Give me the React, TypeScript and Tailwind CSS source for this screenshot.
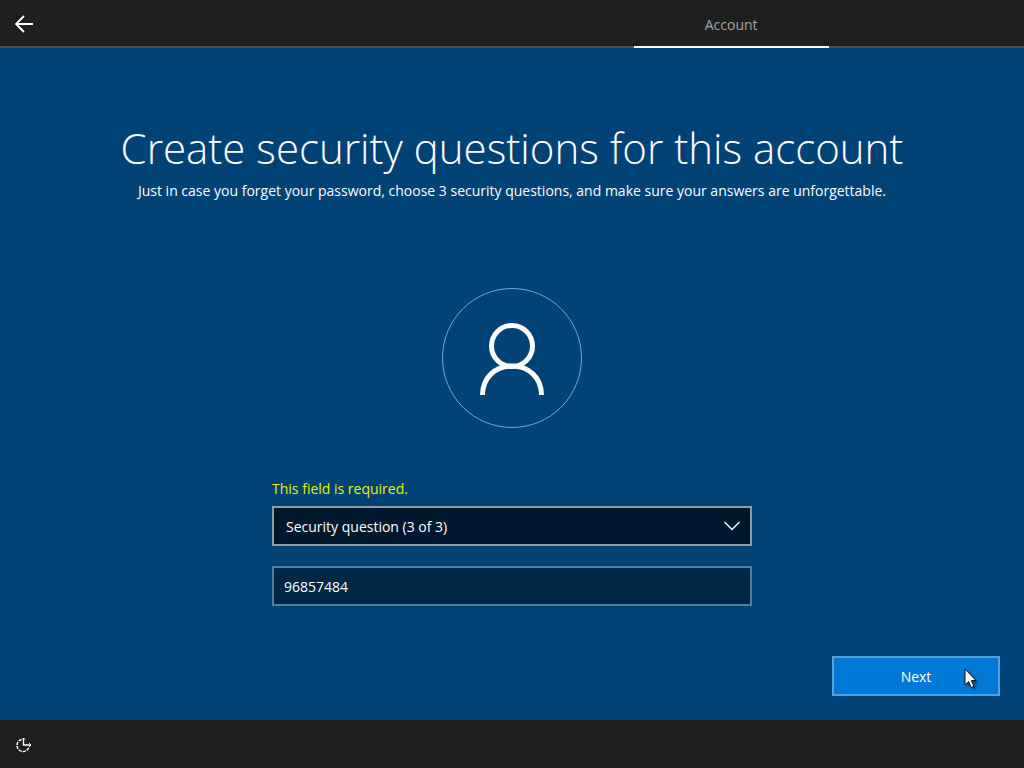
import { useState } from 'react';

const STEPS = ['', '', '', 'Account', ''];
const ACTIVE_STEP = 3;

const QUESTIONS = [
  'Security question (3 of 3)',
  "What was your first pet's name?",
  "What's the name of the city where you were born?",
  'What was your childhood nickname?',
];

function BackIcon() {
  return (
    <svg width="20" height="18" viewBox="0 0 20 18" fill="none" stroke="#fff" strokeWidth="1.8" aria-hidden="true">
      <path d="M19 9H2M10 1L2 9l8 8" />
    </svg>
  );
}

function UserIcon() {
  return (
    <svg width="66" height="74" viewBox="0 0 66 74" fill="none" stroke="#fff" strokeWidth="5" aria-hidden="true">
      <circle cx="33" cy="24" r="20.5" />
      <path d="M3.5 73C3.5 56 16 44 33 44s29.5 12 29.5 29" />
    </svg>
  );
}

function EaseOfAccessIcon() {
  return (
    <svg width="18" height="16" viewBox="0 0 18 16" fill="none" stroke="#fff" strokeWidth="1.4" aria-hidden="true">
      <path d="M6.500 2.500A6 6 0 0 0 2 8.500a6 6 0 0 0 6 6 6 6 0 0 0 6-4.500" strokeDasharray="3.200 1" />
      <path d="M8.500 1v7H16" />
      <path d="M7 2.500l1.500-1.500L10 2.500M14 6l2 2-2 2" strokeWidth="1" />
    </svg>
  );
}

function Pointer() {
  return (
    <svg
      className="absolute right-5 top-[10px] drop-shadow-[2px_2px_1px_rgba(0,0,0,0.4)]"
      width="14"
      height="21"
      viewBox="0 0 14 21"
      aria-hidden="true"
    >
      <path d="M1 1v16l3.700-3.500 2.500 6 2.700-1.200-2.500-5.700H12z" fill="#fff" stroke="#111" strokeWidth="1" />
    </svg>
  );
}

export default function App() {
  const [question, setQuestion] = useState(QUESTIONS[0]);
  const [answer, setAnswer] = useState('96857484');

  return (
    <div className="min-h-screen flex flex-col bg-[#004275] text-white text-sm font-['Open_Sans',sans-serif]">
      <header className="h-12 flex bg-[#1f1f1f]">
        <button type="button" aria-label="Back" className="w-12 pt-0.5 flex items-center justify-center border-b-2 border-[#505050]">
          <BackIcon />
        </button>
        <nav className="flex-1 grid grid-cols-5">
          {STEPS.map((step, i) => (
            <div
              key={i}
              className={`flex items-center justify-center pt-1 border-b-2 text-[#a6a6a6] ${
                i === ACTIVE_STEP ? 'border-white' : 'border-[#505050]'
              }`}
            >
              {step}
            </div>
          ))}
        </nav>
      </header>

      <main className="flex-1 flex flex-col items-center px-6 pt-[70px] pb-6">
        <h1 className="text-[42px] leading-[60px] font-light text-center">
          Create security questions for this account
        </h1>
        <p className="mt-[3px] leading-5 text-center">
          Just in case you forget your password, choose 3 security questions, and make sure your answers are unforgettable.
        </p>

        <div className="mt-[87px] size-[140px] pt-0.5 rounded-full border border-[#6fa8dc] flex items-center justify-center">
          <UserIcon />
        </div>

        <form className="mt-[51px] w-full max-w-[480px]">
          <label htmlFor="question" className="block leading-5 text-[#e6f500]">
            This field is required.
          </label>
          <div className="relative mt-[7px]">
            <select
              id="question"
              value={question}
              onChange={(e) => setQuestion(e.target.value)}
              className="block w-full h-10 appearance-none border-2 border-[#8f9ba5] bg-[#00182d] px-3 pt-0.5"
            >
              {QUESTIONS.map((q) => (
                <option key={q}>{q}</option>
              ))}
            </select>
            <svg
              className="absolute right-3 top-[15px] pointer-events-none"
              width="16"
              height="10"
              viewBox="0 0 16 10"
              fill="none"
              stroke="#fff"
              strokeWidth="1.4"
              aria-hidden="true"
            >
              <path d="M0.500 1L8 8.500 15.500 1" />
            </svg>
          </div>
          <input
            type="text"
            aria-label="Answer"
            value={answer}
            onChange={(e) => setAnswer(e.target.value)}
            className="mt-5 block w-full h-10 border-2 border-[#557c9c] bg-[#002646] px-2.5"
          />
        </form>

        <button
          type="button"
          className="relative mt-auto self-end w-[168px] h-10 pt-0.5 bg-[#0078d7] border-2 border-[#4da1e3]"
        >
          Next
          <Pointer />
        </button>
      </main>

      <footer className="h-12 flex items-center bg-[#1f1f1f]">
        <button type="button" aria-label="Ease of access" className="size-12 pt-0.5 flex items-center justify-center">
          <EaseOfAccessIcon />
        </button>
      </footer>
    </div>
  );
}
